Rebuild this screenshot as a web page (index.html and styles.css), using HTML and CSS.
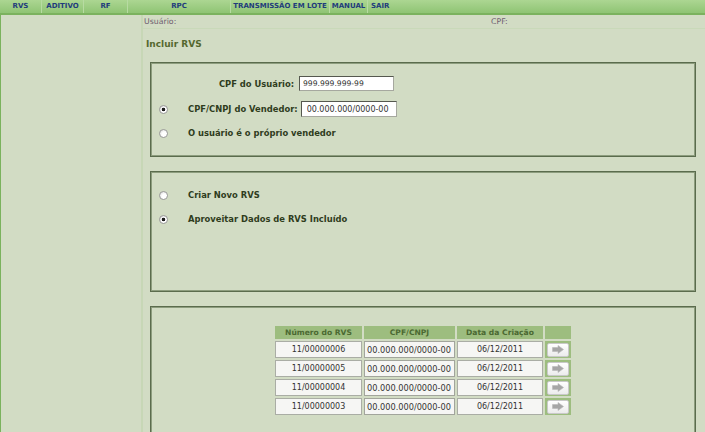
FILE: index.html
```html
<!DOCTYPE html>
<html lang="pt-BR">
<head>
<meta charset="utf-8">
<title>Incluir RVS</title>
<link rel="stylesheet" href="styles.css">
</head>
<body>
<nav class="menubar">
  <a class="mi mi-rvs">RVS</a>
  <a class="mi mi-aditivo">ADITIVO</a>
  <a class="mi mi-rf">RF</a>
  <a class="mi mi-rpc">RPC</a>
  <a class="mi mi-lote">TRANSMISSÃO EM LOTE</a>
  <a class="mi mi-manual">MANUAL</a>
  <a class="mi mi-sair">SAIR</a>
</nav>
<div class="layout">
  <aside class="sidebar"></aside>
  <main class="main">
    <div class="info">
      <span class="info-user">Usuário:</span>
      <span class="info-cpf">CPF:</span>
    </div>
    <h1 class="title">Incluir RVS</h1>

    <section class="box box-vendedor">
      <div class="row row-user">
        <label class="lbl lbl-right">CPF do Usuário:</label>
        <input class="field field-user" type="text" value="999.999.999-99">
      </div>
      <div class="row row-vend">
        <input class="radio" type="radio" name="vend" checked>
        <label class="lbl lbl-radio">CPF/CNPJ do Vendedor:</label>
        <input class="field field-vend" type="text" value="00.000.000/0000-00">
      </div>
      <div class="row row-self">
        <input class="radio" type="radio" name="vend">
        <label class="lbl lbl-radio">O usuário é o próprio vendedor</label>
      </div>
    </section>

    <section class="box box-opcao">
      <div class="row row-novo">
        <input class="radio" type="radio" name="op">
        <label class="lbl lbl-radio">Criar Novo RVS</label>
      </div>
      <div class="row row-aprov">
        <input class="radio" type="radio" name="op" checked>
        <label class="lbl lbl-radio">Aproveitar Dados de RVS Incluído</label>
      </div>
    </section>

    <section class="box box-lista">
      <table class="grid">
        <thead>
          <tr>
            <th class="c1">Número do RVS</th>
            <th class="c2">CPF/CNPJ</th>
            <th class="c3">Data da Criação</th>
            <th class="c4"></th>
          </tr>
        </thead>
        <tbody>
          <tr>
            <td class="c1">11/00000006</td>
            <td class="c2">00.000.000/0000-00</td>
            <td class="c3">06/12/2011</td>
            <td class="c4"><button class="go" type="button"><svg width="12" height="9" viewBox="0 0 12 9"><path d="M0.5 2.5H6V0.5L11.5 4.5L6 8.5V6.5H0.5Z" fill="#a6a6a6" stroke="#b8b8b8" stroke-width="0.6"/></svg></button></td>
          </tr>
          <tr>
            <td class="c1">11/00000005</td>
            <td class="c2">00.000.000/0000-00</td>
            <td class="c3">06/12/2011</td>
            <td class="c4"><button class="go" type="button"><svg width="12" height="9" viewBox="0 0 12 9"><path d="M0.5 2.5H6V0.5L11.5 4.5L6 8.5V6.5H0.5Z" fill="#a6a6a6" stroke="#b8b8b8" stroke-width="0.6"/></svg></button></td>
          </tr>
          <tr>
            <td class="c1">11/00000004</td>
            <td class="c2">00.000.000/0000-00</td>
            <td class="c3">06/12/2011</td>
            <td class="c4"><button class="go" type="button"><svg width="12" height="9" viewBox="0 0 12 9"><path d="M0.5 2.5H6V0.5L11.5 4.5L6 8.5V6.5H0.5Z" fill="#a6a6a6" stroke="#b8b8b8" stroke-width="0.6"/></svg></button></td>
          </tr>
          <tr>
            <td class="c1">11/00000003</td>
            <td class="c2">00.000.000/0000-00</td>
            <td class="c3">06/12/2011</td>
            <td class="c4"><button class="go" type="button"><svg width="12" height="9" viewBox="0 0 12 9"><path d="M0.5 2.5H6V0.5L11.5 4.5L6 8.5V6.5H0.5Z" fill="#a6a6a6" stroke="#b8b8b8" stroke-width="0.6"/></svg></button></td>
          </tr>
        </tbody>
      </table>
    </section>
  </main>
</div>
</body>
</html>
```
FILE: styles.css
```css
* { box-sizing: border-box; }

html, body {
  margin: 0;
  padding: 0;
  height: 432px;
  overflow: hidden;
}

body {
  background: #d2dcc4;
  font-family: "DejaVu Sans", Verdana, sans-serif;
}

/* ---------- top menu ---------- */
.menubar {
  display: flex;
  height: 15px;
  background: linear-gradient(#acd692, #8fc474);
  border-bottom: 2px solid #7bb25e;
}

.mi {
  display: block;
  height: 13px;
  line-height: 13px;
  font-size: 7px;
  font-weight: bold;
  color: #1f3c7c;
  text-align: center;
  border-right: 1px solid #b7dba2;
  white-space: nowrap;
}

.mi-rvs { width: 42px; }
.mi-aditivo { width: 42px; }
.mi-rf { width: 44px; }
.mi-rpc { width: 103px; }
.mi-lote { width: 99px; }
.mi-manual { width: 38px; }
.mi-sair { width: 30px; border-right: none; text-align: left; padding-left: 3px; }

/* ---------- layout ---------- */
.layout {
  display: flex;
  height: 417px;
}

.sidebar {
  width: 143px;
  flex: none;
  border-left: 1px solid #7ab25d;
  border-right: 2px solid #c7d7b6;
}

.main {
  flex: 1;
  min-width: 0;
}

.info {
  display: grid;
  grid-template-columns: 347px auto;
  height: 14px;
  line-height: 13px;
  font-size: 7.8px;
  color: #6e5d70;
  border-bottom: 1px solid #c9d9b9;
  padding-left: 1px;
}

.title {
  margin: 9px 0 11px 3px;
  font-size: 9px;
  line-height: 13px;
  font-weight: bold;
  color: #55682f;
}

/* ---------- boxes ---------- */
.box {
  margin: 0 9px 14px 7px;
  border: 1px solid #5b6c4d;
  box-shadow: inset 0 0 0 1px #8d9d7e;
}

.box-vendedor { height: 95px; padding: 13px 0 0 2px; }
.box-opcao { height: 121px; padding: 16px 0 0 2px; }
.box-lista { height: 140px; padding-top: 17px; }

.row {
  display: flex;
  align-items: center;
}

.row-user { height: 15px; }
.row-vend { height: 16px; margin-top: 10px; }
.row-self { height: 14px; margin-top: 9px; }
.row-novo { height: 14px; }
.row-aprov { height: 14px; margin-top: 10px; }

.lbl {
  font-size: 8.4px;
  font-weight: bold;
  color: #2f3c1d;
  white-space: nowrap;
}

.lbl-right {
  width: 141px;
  text-align: right;
}

.lbl-radio {
  margin-left: 20px;
}

.radio {
  appearance: none;
  -webkit-appearance: none;
  margin: 0 0 0 6px;
  width: 9px;
  height: 9px;
  border-radius: 50%;
  border: 1px solid #9a9a9a;
  background: radial-gradient(circle at 65% 65%, #ffffff 0 40%, #d2d2d2 100%);
  flex: none;
}

.radio:checked {
  background:
    radial-gradient(circle, #1e1e1e 0 1.5px, transparent 2.1px),
    radial-gradient(circle at 65% 65%, #ffffff 0 40%, #d2d2d2 100%);
}

.field {
  height: 15px;
  border: 1px solid #55584f;
  border-right-color: #a6a89f;
  border-bottom-color: #a6a89f;
  background: #ffffff;
  font-family: "DejaVu Sans", Verdana, sans-serif;
  font-size: 7.6px;
  color: #333333;
  padding: 0 3px;
  margin: 0;
}

.field-user { width: 95px; margin-left: 5px; }
.field-vend { width: 96px; height: 16px; margin-left: 3px; font-size: 8px; padding-left: 5px; }

/* ---------- table ---------- */
.grid {
  border-collapse: separate;
  border-spacing: 2px;
  margin: 0 auto;
  font-size: 8px;
  color: #333333;
}

.grid th {
  height: 13px;
  padding: 0;
  background: #9dbd7f;
  color: #4b6932;
  font-size: 7.6px;
  font-weight: bold;
  text-align: center;
}

.grid td {
  height: 17px;
  padding: 0;
  background: #f6f6f4;
  border: 1px solid #aaada5;
  text-align: center;
}

.grid .c1 { width: 87px; }
.grid .c2 { width: 91px; }
.grid .c3 { width: 86px; }
.grid .c4 { width: 26px; }

.grid td.c2 {
  text-align: left;
  padding-left: 2px;
  font-size: 8.2px;
  border-color: #a2a59c;
}

.grid td.c4 {
  background: #9dbd7f;
  border: none;
  padding: 1px 2px 1px 2px;
}

.go {
  display: flex;
  align-items: center;
  justify-content: center;
  width: 22px;
  height: 14px;
  padding: 0;
  margin: 0;
  border: 1px solid #c9c9c9;
  border-radius: 2px;
  background: linear-gradient(#ffffff, #ececec);
}
```
